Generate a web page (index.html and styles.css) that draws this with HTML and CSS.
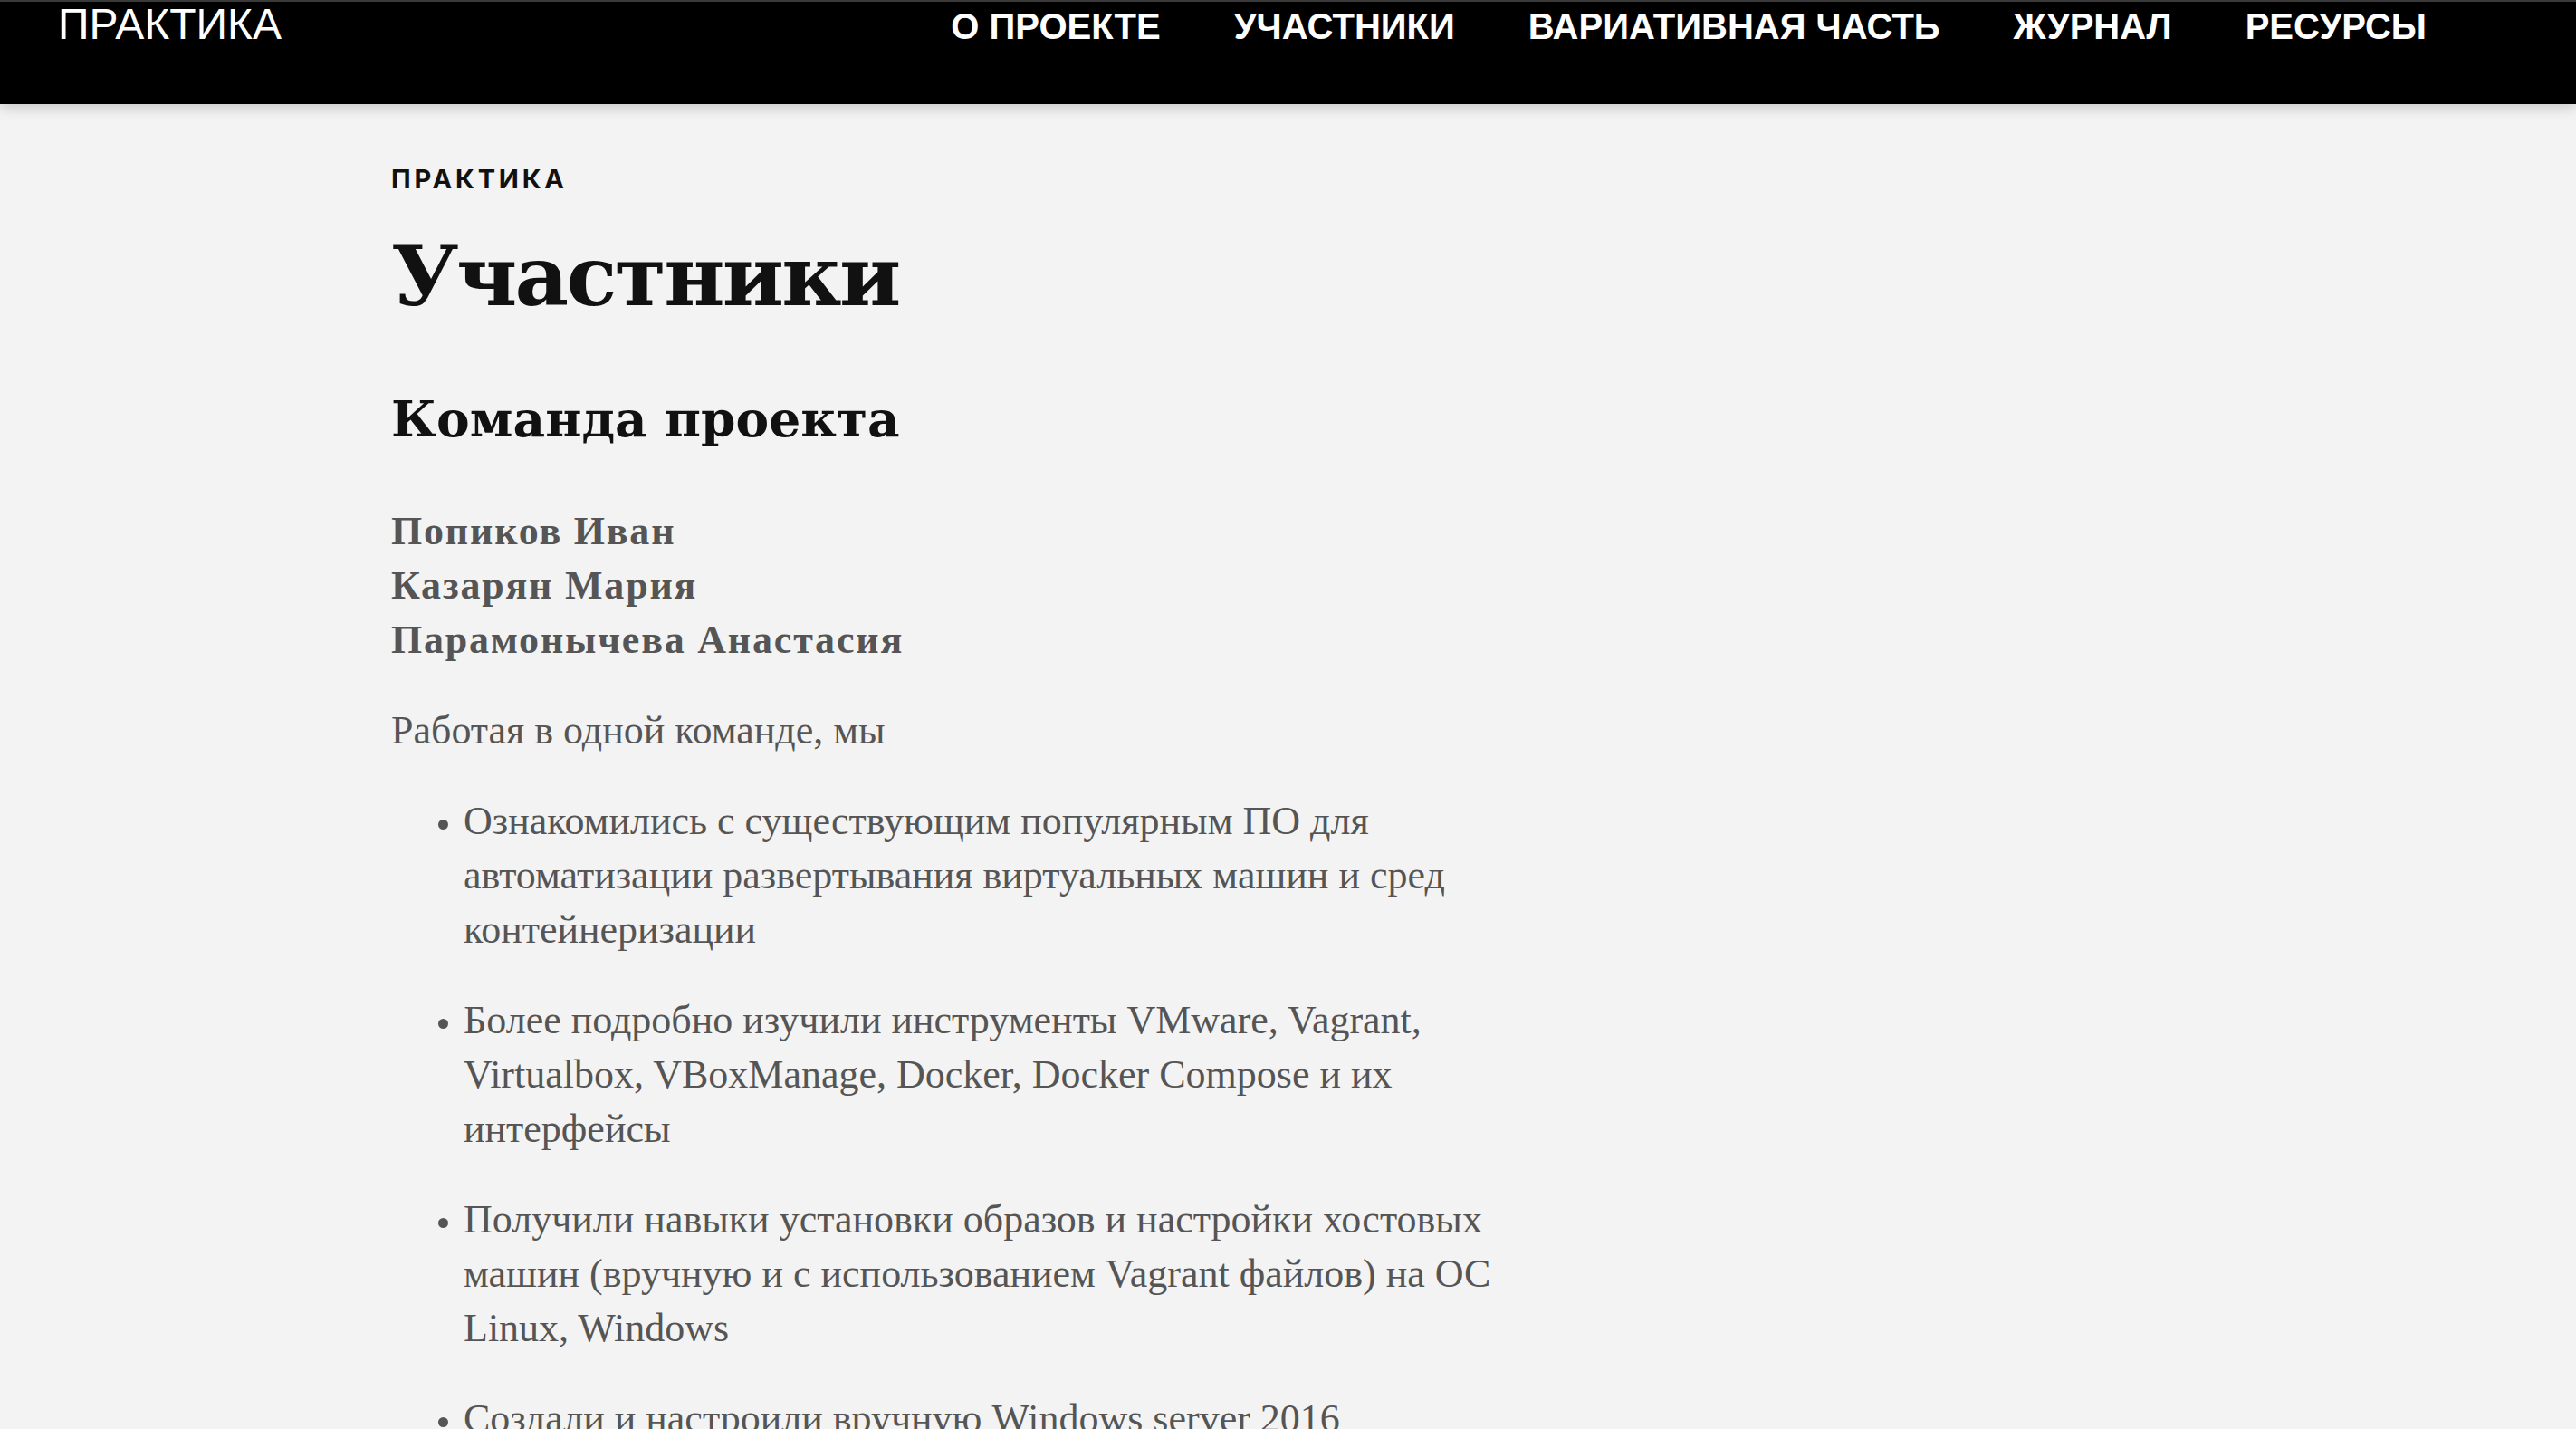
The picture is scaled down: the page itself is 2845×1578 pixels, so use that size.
FILE: index.html
```html
<!DOCTYPE html>
<html lang="ru">
<head>
<meta charset="utf-8">
<title>Участники – ПРАКТИКА</title>
<link rel="stylesheet" href="styles.css">
</head>
<body>
<header class="site-header">
  <a class="logo" href="#">ПРАКТИКА</a>
  <nav class="nav">
    <a href="#">О ПРОЕКТЕ</a>
    <a href="#">УЧАСТНИКИ</a>
    <a href="#">ВАРИАТИВНАЯ ЧАСТЬ</a>
    <a href="#">ЖУРНАЛ</a>
    <a href="#">РЕСУРСЫ</a>
  </nav>
</header>
<main class="content">
  <div class="eyebrow">ПРАКТИКА</div>
  <h1 class="title">Участники</h1>
  <h2 class="subtitle">Команда проекта</h2>
  <p class="names"><strong>Попиков Иван</strong><br><strong>Казарян Мария</strong><br><strong>Парамонычева Анастасия</strong></p>
  <p class="text">Работая в одной команде, мы</p>
  <ul class="list">
    <li>Ознакомились с существующим популярным ПО для автоматизации развертывания виртуальных машин и сред контейнеризации</li>
    <li>Более подробно изучили инструменты VMware, Vagrant, Virtualbox, VBoxManage, Docker, Docker Compose и их интерфейсы</li>
    <li>Получили навыки установки образов и настройки хостовых машин (вручную и с использованием Vagrant файлов) на ОС Linux, Windows</li>
    <li>Создали и настроили вручную Windows server 2016</li>
  </ul>
</main>
</body>
</html>
```
FILE: styles.css
```css
html, body {
  margin: 0;
  padding: 0;
}
body {
  background: #f3f3f3;
  color: #555;
  font-family: "Liberation Serif", "Times New Roman", serif;
  font-size: 44px;
  line-height: 60px;
  overflow: hidden;
}
a { color: inherit; text-decoration: none; }

.site-header {
  box-sizing: border-box;
  height: 115px;
  background: #000;
  border-top: 2px solid #3a3a3a;
  display: flex;
  align-items: baseline;
  justify-content: space-between;
  padding: 2px 165px 0 64px;
  box-shadow: 0 4px 14px rgba(0, 0, 0, 0.18);
  position: relative;
  z-index: 1;
}
.logo {
  font-family: "Liberation Sans", Arial, sans-serif;
  font-size: 48px;
  line-height: 46px;
  color: #fff;
}
.nav {
  display: flex;
  gap: 81px;
  align-items: baseline;
}
.nav a {
  font-family: "Liberation Sans", Arial, sans-serif;
  font-weight: 700;
  font-size: 40px;
  line-height: 46px;
  color: #fff;
}

.content {
  padding: 65px 0 0 432px;
  width: 1260px;
}
.eyebrow {
  font-family: Inter, "Open Sans", sans-serif;
  font-weight: 700;
  font-size: 29px;
  line-height: 35px;
  letter-spacing: 0.13em;
  color: #111;
}
.title {
  margin: 33px 0 0;
  font-family: "DejaVu Serif", "Liberation Serif", serif;
  font-weight: 700;
  font-size: 92px;
  line-height: 114px;
  letter-spacing: -2.7px;
  color: #111;
}
.subtitle {
  margin: 65px 0 0;
  font-family: "DejaVu Serif", "Liberation Serif", serif;
  font-weight: 700;
  font-size: 55px;
  line-height: 72px;
  color: #111;
}
.names {
  margin: 58px 0 0;
  letter-spacing: 1.8px;
}
.names strong { font-weight: 700; }
.text {
  margin: 40px 0 0;
}
.list {
  margin: 40px 0 0;
  padding: 0 0 0 80px;
}
.list li {
  margin: 0 0 40px;
}
.list li::marker {
  font-size: 36px;
}
```
